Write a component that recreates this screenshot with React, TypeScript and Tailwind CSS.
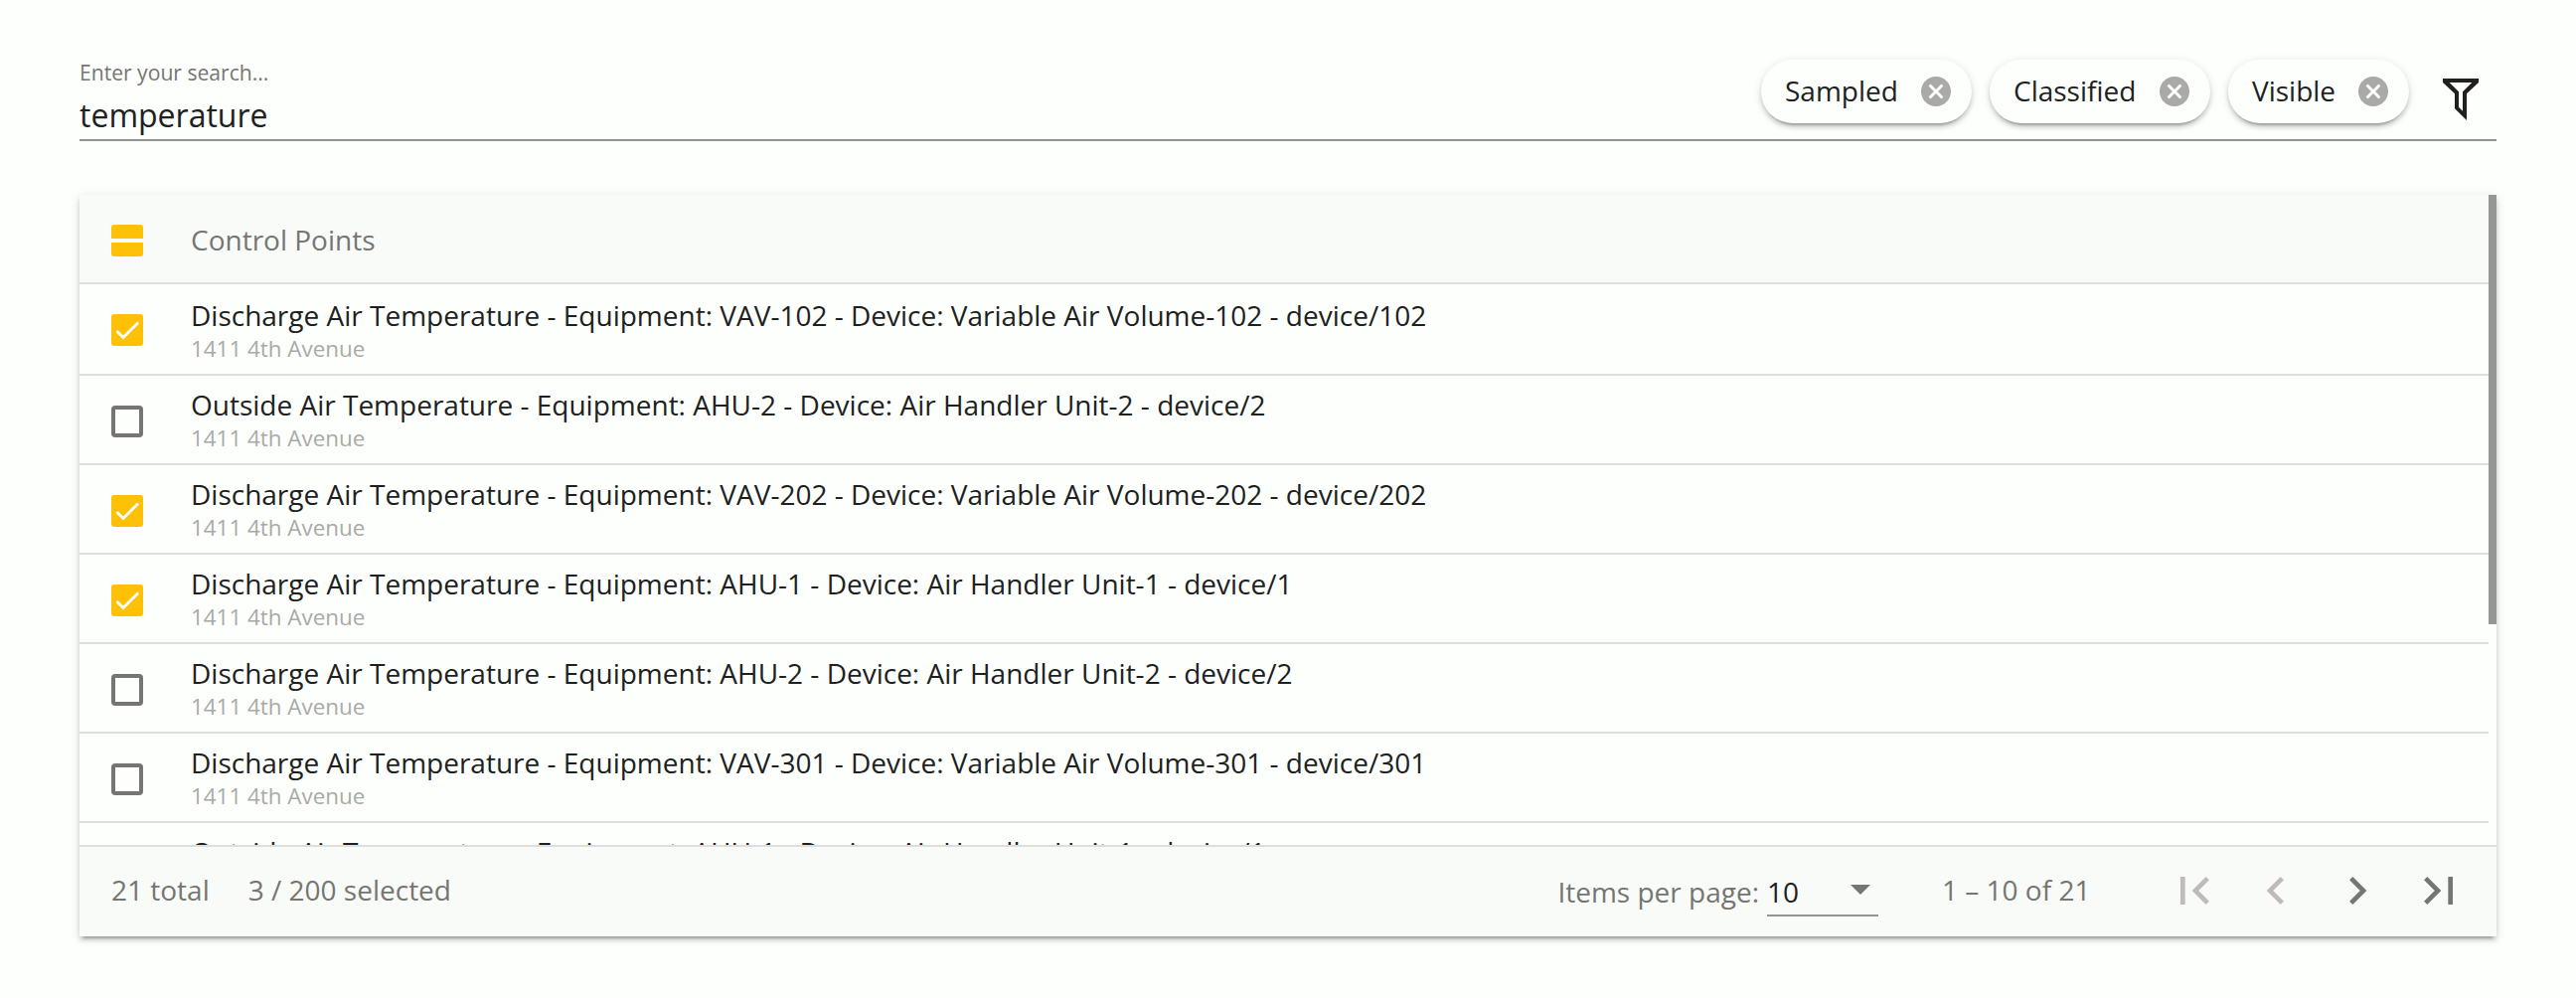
import React from 'react';

type Point = { name: string; address?: string; checked: boolean };

const address = '1411 4th Avenue';

const points: Point[] = [
  { name: 'Discharge Air Temperature - Equipment: VAV-102 - Device: Variable Air Volume-102 - device/102', address, checked: true },
  { name: 'Outside Air Temperature - Equipment: AHU-2 - Device: Air Handler Unit-2 - device/2', address, checked: false },
  { name: 'Discharge Air Temperature - Equipment: VAV-202 - Device: Variable Air Volume-202 - device/202', address, checked: true },
  { name: 'Discharge Air Temperature - Equipment: AHU-1 - Device: Air Handler Unit-1 - device/1', address, checked: true },
  { name: 'Discharge Air Temperature - Equipment: AHU-2 - Device: Air Handler Unit-2 - device/2', address, checked: false },
  { name: 'Discharge Air Temperature - Equipment: VAV-301 - Device: Variable Air Volume-301 - device/301', address, checked: false },
  { name: 'Outside Air Temperature - Equipment: AHU-1 - Device: Air Handler Unit-1 - device/1', checked: false },
];

const chips = [
  { label: 'Sampled', width: 'w-[212px]' },
  { label: 'Classified', width: 'w-[222px]' },
  { label: 'Visible', width: 'w-[182px]' },
];

const pagerIcons = [
  { label: 'First page', enabled: false, d: 'M18.41 16.59L13.82 12l4.59-4.59L17 6l-6 6 6 6zM6 6h2v12H6z' },
  { label: 'Previous page', enabled: false, d: 'M15.41 7.41L14 6l-6 6 6 6 1.41-1.41L10.83 12z' },
  { label: 'Next page', enabled: true, d: 'M10 6L8.59 7.41 13.17 12l-4.58 4.59L10 18l6-6z' },
  { label: 'Last page', enabled: true, d: 'M5.59 7.41L10.18 12l-4.59 4.59L7 18l6-6-6-6zM16 6h2v12h-2z' },
];

function Checkbox({ checked }: { checked: boolean }) {
  if (!checked) {
    return <span className="block size-8 shrink-0 rounded-[4px] border-4 border-[#757672]" />;
  }
  return (
    <span className="block size-8 shrink-0 rounded-[3px] bg-[#ffc107]">
      <svg viewBox="0 0 24 24" className="size-8" fill="none" stroke="#fdfffc" strokeWidth="2.13">
        <path d="M4.1 12.7L9 17.6 20.3 6.3" />
      </svg>
    </span>
  );
}

function Chip({ label, width }: { label: string; width: string }) {
  return (
    <div
      className={`${width} flex h-16 items-center justify-between rounded-full bg-[#fdfffc] pr-[18px] pl-6 shadow-[0_6px_2px_-4px_rgba(0,0,0,0.2),0_4px_4px_rgba(0,0,0,0.14),0_2px_10px_rgba(0,0,0,0.12)]`}
    >
      <span className="pb-0.5 leading-10 text-[#20211f]">{label}</span>
      <svg viewBox="0 0 24 24" className="size-9" fill="#a9aaa8">
        <path d="M12 2C6.47 2 2 6.47 2 12s4.47 10 10 10 10-4.47 10-10S17.53 2 12 2zm5 13.59L15.59 17 12 13.41 8.41 17 7 15.59 10.59 12 7 8.41 8.41 7 12 10.59 15.59 7 17 8.41 13.41 12 17 15.59z" />
      </svg>
    </div>
  );
}

function Row({ point, first }: { point: Point; first: boolean }) {
  return (
    <div
      className={`flex shrink-0 border-b-2 border-[#dddfdc] pl-8 ${first ? 'h-[92px]' : 'h-[90px]'}`}
    >
      <div className="pt-[30px]">
        <Checkbox checked={point.checked} />
      </div>
      <div className={`pl-12 whitespace-nowrap ${first ? 'pt-[13px]' : 'pt-[11px]'}`}>
        <div className="leading-9 text-[#20211f]">{point.name}</div>
        {point.address && (
          <div className="text-[22.4px] leading-8 text-[#a9aaa8]">{point.address}</div>
        )}
      </div>
    </div>
  );
}

export default function App() {
  return (
    <div className="h-[1004px] w-full overflow-hidden bg-[#fdfffc] px-20 font-['Open_Sans',sans-serif] text-[28px] text-[#757672]">
      <div className="flex h-[142px] justify-between border-b-2 border-[#939592]">
        <div className="pt-[58px]">
          <div className="text-[21.1px] leading-[30px]">Enter your search...</div>
          <div className="mt-2 text-[32px] leading-10 text-[#20211f]">temperature</div>
        </div>
        <div className="flex pt-[60px] pr-[18px]">
          <div className="flex gap-[18px]">
            {chips.map((c) => (
              <Chip key={c.label} label={c.label} width={c.width} />
            ))}
          </div>
          <svg viewBox="54 57 108 126" className="mt-[19px] ml-[34px] h-[42px] w-9" fill="#20211f" fillRule="evenodd">
            <path d="M54 57H162V69L126 103V183L90 148V103L54 69ZM74 69L102 97V143L114 155V97L142 69Z" />
          </svg>
        </div>
      </div>

      <div className="mt-[54px] flex h-[746px] flex-col bg-[#fdfffc] shadow-[0_6px_2px_-4px_rgba(0,0,0,0.2),0_4px_4px_rgba(0,0,0,0.14),0_2px_10px_rgba(0,0,0,0.12)]">
        <div className="flex h-[654px] overflow-hidden">
          <div className="flex grow flex-col overflow-hidden">
            <div className="flex h-[90px] shrink-0 border-b-2 border-[#dddfdc] bg-[#f9fbf9] pl-8">
              <div className="pt-[30px]">
                <div className="flex size-8 flex-col justify-between">
                  <div className="h-[14px] rounded-t-[3px] bg-[#ffc107]" />
                  <div className="h-[14px] rounded-b-[3px] bg-[#ffc107]" />
                </div>
              </div>
              <div className="pt-[25px] pl-12 leading-10">Control Points</div>
            </div>
            {points.map((p, i) => (
              <Row key={i} point={p} first={i === 0} />
            ))}
          </div>
          <div className="w-2 shrink-0">
            <div className="h-[432px] bg-[#959794]" />
          </div>
        </div>

        <div className="flex h-[92px] items-start justify-between border-t-2 border-[#dddfdc] bg-[#f9fbf9] pr-[30px] pl-8 leading-10">
          <div className="flex gap-[39px] pt-[23px]">
            <span>21 total</span>
            <span>3 / 200 selected</span>
          </div>
          <div className="flex">
            <span className="pt-[25px]">Items per page:</span>
            <div className="ml-2 flex h-[70px] w-28 justify-between border-b-2 border-[#939592] pt-[25px] pr-2 text-[#20211f]">
              <span>10</span>
              <svg viewBox="0 0 20 10" className="mt-[13px] h-[10px] w-5" fill="#757672">
                <path d="M0 0H20L10 10Z" />
              </svg>
            </div>
            <span className="w-[290px] pt-[23px] pl-16">1 – 10 of 21</span>
            <div className="flex gap-[26px] pt-4">
              {pagerIcons.map((icon) => (
                <svg
                  key={icon.label}
                  aria-label={icon.label}
                  viewBox="0 0 24 24"
                  className={`size-14 ${icon.enabled ? 'fill-[#757672]' : 'fill-[#bfbbb9]'}`}
                >
                  <path d={icon.d} />
                </svg>
              ))}
            </div>
          </div>
        </div>
      </div>
    </div>
  );
}
